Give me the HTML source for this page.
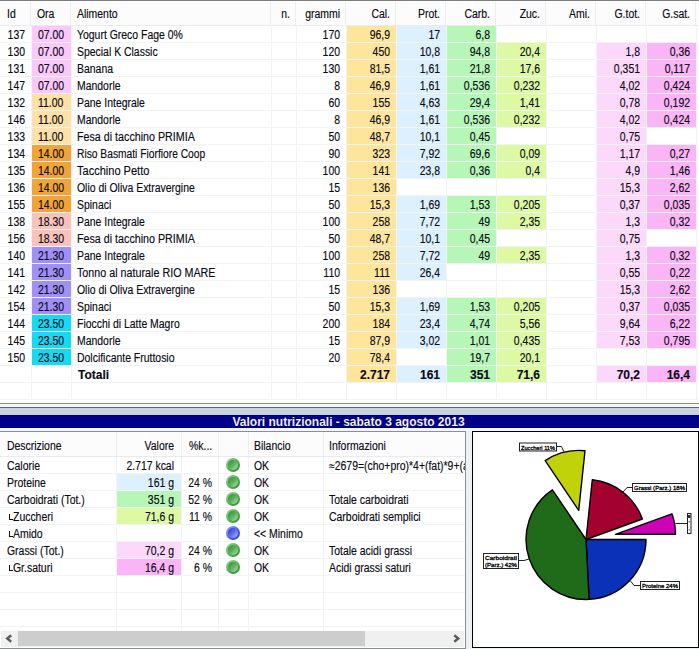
<!DOCTYPE html><html><head><meta charset="utf-8"><style>
html,body{margin:0;padding:0;}
body{width:699px;height:649px;overflow:hidden;position:relative;background:#fff;font-family:"Liberation Sans", sans-serif;font-size:12px;color:#000;}
div{position:absolute;box-sizing:border-box;}
.t{white-space:nowrap;line-height:16px;height:16px;color:#0a0a14;-webkit-text-stroke:0.15px #0a0a14;}
.l{transform-origin:0 0;transform:scaleX(0.87);}
.r{transform-origin:100% 0;transform:scaleX(0.87);text-align:right;}
.b{font-weight:bold;transform:none;}
</style></head><body>
<div style="left:0;top:0;width:699px;height:1px;background:#7b7d7f"></div>
<div style="left:0;top:2px;width:699px;height:23px;background:#fcfcfd"></div>
<div style="left:0;top:25px;width:699px;height:1px;background:#e9ebee"></div>
<div style="left:30px;top:2px;width:1px;height:23px;background:#eceef1"></div>
<div style="left:70px;top:2px;width:1px;height:23px;background:#eceef1"></div>
<div style="left:270px;top:2px;width:1px;height:23px;background:#eceef1"></div>
<div style="left:295px;top:2px;width:1px;height:23px;background:#eceef1"></div>
<div style="left:345px;top:2px;width:1px;height:23px;background:#eceef1"></div>
<div style="left:395px;top:2px;width:1px;height:23px;background:#eceef1"></div>
<div style="left:445px;top:2px;width:1px;height:23px;background:#eceef1"></div>
<div style="left:495px;top:2px;width:1px;height:23px;background:#eceef1"></div>
<div style="left:545px;top:2px;width:1px;height:23px;background:#eceef1"></div>
<div style="left:595px;top:2px;width:1px;height:23px;background:#eceef1"></div>
<div style="left:645px;top:2px;width:1px;height:23px;background:#eceef1"></div>
<div style="left:695px;top:2px;width:1px;height:23px;background:#eceef1"></div>
<div style="left:0;top:42px;width:699px;height:1px;background:#f2f3f4"></div>
<div style="left:0;top:59px;width:699px;height:1px;background:#f2f3f4"></div>
<div style="left:0;top:76px;width:699px;height:1px;background:#f2f3f4"></div>
<div style="left:0;top:93px;width:699px;height:1px;background:#f2f3f4"></div>
<div style="left:0;top:110px;width:699px;height:1px;background:#f2f3f4"></div>
<div style="left:0;top:127px;width:699px;height:1px;background:#f2f3f4"></div>
<div style="left:0;top:144px;width:699px;height:1px;background:#f2f3f4"></div>
<div style="left:0;top:161px;width:699px;height:1px;background:#f2f3f4"></div>
<div style="left:0;top:178px;width:699px;height:1px;background:#f2f3f4"></div>
<div style="left:0;top:195px;width:699px;height:1px;background:#f2f3f4"></div>
<div style="left:0;top:212px;width:699px;height:1px;background:#f2f3f4"></div>
<div style="left:0;top:229px;width:699px;height:1px;background:#f2f3f4"></div>
<div style="left:0;top:246px;width:699px;height:1px;background:#f2f3f4"></div>
<div style="left:0;top:263px;width:699px;height:1px;background:#f2f3f4"></div>
<div style="left:0;top:280px;width:699px;height:1px;background:#f2f3f4"></div>
<div style="left:0;top:297px;width:699px;height:1px;background:#f2f3f4"></div>
<div style="left:0;top:314px;width:699px;height:1px;background:#f2f3f4"></div>
<div style="left:0;top:331px;width:699px;height:1px;background:#f2f3f4"></div>
<div style="left:0;top:348px;width:699px;height:1px;background:#f2f3f4"></div>
<div style="left:0;top:365px;width:699px;height:1px;background:#f2f3f4"></div>
<div style="left:0;top:382px;width:699px;height:1px;background:#f2f3f4"></div>
<div style="left:0;top:399px;width:699px;height:1px;background:#f2f3f4"></div>
<div style="left:31px;top:26px;width:1px;height:374px;background:#f2f3f4"></div>
<div style="left:71px;top:26px;width:1px;height:374px;background:#f2f3f4"></div>
<div style="left:271px;top:26px;width:1px;height:374px;background:#f2f3f4"></div>
<div style="left:296px;top:26px;width:1px;height:374px;background:#f2f3f4"></div>
<div style="left:346px;top:26px;width:1px;height:374px;background:#f2f3f4"></div>
<div style="left:396px;top:26px;width:1px;height:374px;background:#f2f3f4"></div>
<div style="left:446px;top:26px;width:1px;height:374px;background:#f2f3f4"></div>
<div style="left:496px;top:26px;width:1px;height:374px;background:#f2f3f4"></div>
<div style="left:546px;top:26px;width:1px;height:374px;background:#f2f3f4"></div>
<div style="left:596px;top:26px;width:1px;height:374px;background:#f2f3f4"></div>
<div style="left:646px;top:26px;width:1px;height:374px;background:#f2f3f4"></div>
<div style="left:696px;top:26px;width:1px;height:374px;background:#f2f3f4"></div>
<div style="left:32px;top:26px;width:39px;height:16px;background:#fbc8fb"></div>
<div style="left:347px;top:26px;width:49px;height:16px;background:#fde59c"></div>
<div style="left:397px;top:26px;width:49px;height:16px;background:#ddf0fd"></div>
<div style="left:447px;top:26px;width:49px;height:16px;background:#b6f6b6"></div>
<div style="left:32px;top:43px;width:39px;height:16px;background:#fbc8fb"></div>
<div style="left:347px;top:43px;width:49px;height:16px;background:#fde59c"></div>
<div style="left:397px;top:43px;width:49px;height:16px;background:#ddf0fd"></div>
<div style="left:447px;top:43px;width:49px;height:16px;background:#b6f6b6"></div>
<div style="left:497px;top:43px;width:49px;height:16px;background:#ddf9a4"></div>
<div style="left:597px;top:43px;width:49px;height:16px;background:#fcd9fb"></div>
<div style="left:647px;top:43px;width:49px;height:16px;background:#fab5f6"></div>
<div style="left:32px;top:60px;width:39px;height:16px;background:#fbc8fb"></div>
<div style="left:347px;top:60px;width:49px;height:16px;background:#fde59c"></div>
<div style="left:397px;top:60px;width:49px;height:16px;background:#ddf0fd"></div>
<div style="left:447px;top:60px;width:49px;height:16px;background:#b6f6b6"></div>
<div style="left:497px;top:60px;width:49px;height:16px;background:#ddf9a4"></div>
<div style="left:597px;top:60px;width:49px;height:16px;background:#fcd9fb"></div>
<div style="left:647px;top:60px;width:49px;height:16px;background:#fab5f6"></div>
<div style="left:32px;top:77px;width:39px;height:16px;background:#fbc8fb"></div>
<div style="left:347px;top:77px;width:49px;height:16px;background:#fde59c"></div>
<div style="left:397px;top:77px;width:49px;height:16px;background:#ddf0fd"></div>
<div style="left:447px;top:77px;width:49px;height:16px;background:#b6f6b6"></div>
<div style="left:497px;top:77px;width:49px;height:16px;background:#ddf9a4"></div>
<div style="left:597px;top:77px;width:49px;height:16px;background:#fcd9fb"></div>
<div style="left:647px;top:77px;width:49px;height:16px;background:#fab5f6"></div>
<div style="left:32px;top:94px;width:39px;height:16px;background:#fde1a6"></div>
<div style="left:347px;top:94px;width:49px;height:16px;background:#fde59c"></div>
<div style="left:397px;top:94px;width:49px;height:16px;background:#ddf0fd"></div>
<div style="left:447px;top:94px;width:49px;height:16px;background:#b6f6b6"></div>
<div style="left:497px;top:94px;width:49px;height:16px;background:#ddf9a4"></div>
<div style="left:597px;top:94px;width:49px;height:16px;background:#fcd9fb"></div>
<div style="left:647px;top:94px;width:49px;height:16px;background:#fab5f6"></div>
<div style="left:32px;top:111px;width:39px;height:16px;background:#fde1a6"></div>
<div style="left:347px;top:111px;width:49px;height:16px;background:#fde59c"></div>
<div style="left:397px;top:111px;width:49px;height:16px;background:#ddf0fd"></div>
<div style="left:447px;top:111px;width:49px;height:16px;background:#b6f6b6"></div>
<div style="left:497px;top:111px;width:49px;height:16px;background:#ddf9a4"></div>
<div style="left:597px;top:111px;width:49px;height:16px;background:#fcd9fb"></div>
<div style="left:647px;top:111px;width:49px;height:16px;background:#fab5f6"></div>
<div style="left:32px;top:128px;width:39px;height:16px;background:#fde1a6"></div>
<div style="left:347px;top:128px;width:49px;height:16px;background:#fde59c"></div>
<div style="left:397px;top:128px;width:49px;height:16px;background:#ddf0fd"></div>
<div style="left:447px;top:128px;width:49px;height:16px;background:#b6f6b6"></div>
<div style="left:597px;top:128px;width:49px;height:16px;background:#fcd9fb"></div>
<div style="left:32px;top:145px;width:39px;height:16px;background:#f2a438"></div>
<div style="left:347px;top:145px;width:49px;height:16px;background:#fde59c"></div>
<div style="left:397px;top:145px;width:49px;height:16px;background:#ddf0fd"></div>
<div style="left:447px;top:145px;width:49px;height:16px;background:#b6f6b6"></div>
<div style="left:497px;top:145px;width:49px;height:16px;background:#ddf9a4"></div>
<div style="left:597px;top:145px;width:49px;height:16px;background:#fcd9fb"></div>
<div style="left:647px;top:145px;width:49px;height:16px;background:#fab5f6"></div>
<div style="left:32px;top:162px;width:39px;height:16px;background:#f2a438"></div>
<div style="left:347px;top:162px;width:49px;height:16px;background:#fde59c"></div>
<div style="left:397px;top:162px;width:49px;height:16px;background:#ddf0fd"></div>
<div style="left:447px;top:162px;width:49px;height:16px;background:#b6f6b6"></div>
<div style="left:497px;top:162px;width:49px;height:16px;background:#ddf9a4"></div>
<div style="left:597px;top:162px;width:49px;height:16px;background:#fcd9fb"></div>
<div style="left:647px;top:162px;width:49px;height:16px;background:#fab5f6"></div>
<div style="left:32px;top:179px;width:39px;height:16px;background:#f2a438"></div>
<div style="left:347px;top:179px;width:49px;height:16px;background:#fde59c"></div>
<div style="left:597px;top:179px;width:49px;height:16px;background:#fcd9fb"></div>
<div style="left:647px;top:179px;width:49px;height:16px;background:#fab5f6"></div>
<div style="left:32px;top:196px;width:39px;height:16px;background:#f2a438"></div>
<div style="left:347px;top:196px;width:49px;height:16px;background:#fde59c"></div>
<div style="left:397px;top:196px;width:49px;height:16px;background:#ddf0fd"></div>
<div style="left:447px;top:196px;width:49px;height:16px;background:#b6f6b6"></div>
<div style="left:497px;top:196px;width:49px;height:16px;background:#ddf9a4"></div>
<div style="left:597px;top:196px;width:49px;height:16px;background:#fcd9fb"></div>
<div style="left:647px;top:196px;width:49px;height:16px;background:#fab5f6"></div>
<div style="left:32px;top:213px;width:39px;height:16px;background:#fbc2bc"></div>
<div style="left:347px;top:213px;width:49px;height:16px;background:#fde59c"></div>
<div style="left:397px;top:213px;width:49px;height:16px;background:#ddf0fd"></div>
<div style="left:447px;top:213px;width:49px;height:16px;background:#b6f6b6"></div>
<div style="left:497px;top:213px;width:49px;height:16px;background:#ddf9a4"></div>
<div style="left:597px;top:213px;width:49px;height:16px;background:#fcd9fb"></div>
<div style="left:647px;top:213px;width:49px;height:16px;background:#fab5f6"></div>
<div style="left:32px;top:230px;width:39px;height:16px;background:#fbc2bc"></div>
<div style="left:347px;top:230px;width:49px;height:16px;background:#fde59c"></div>
<div style="left:397px;top:230px;width:49px;height:16px;background:#ddf0fd"></div>
<div style="left:447px;top:230px;width:49px;height:16px;background:#b6f6b6"></div>
<div style="left:597px;top:230px;width:49px;height:16px;background:#fcd9fb"></div>
<div style="left:32px;top:247px;width:39px;height:16px;background:#9f8ff6"></div>
<div style="left:347px;top:247px;width:49px;height:16px;background:#fde59c"></div>
<div style="left:397px;top:247px;width:49px;height:16px;background:#ddf0fd"></div>
<div style="left:447px;top:247px;width:49px;height:16px;background:#b6f6b6"></div>
<div style="left:497px;top:247px;width:49px;height:16px;background:#ddf9a4"></div>
<div style="left:597px;top:247px;width:49px;height:16px;background:#fcd9fb"></div>
<div style="left:647px;top:247px;width:49px;height:16px;background:#fab5f6"></div>
<div style="left:32px;top:264px;width:39px;height:16px;background:#9f8ff6"></div>
<div style="left:347px;top:264px;width:49px;height:16px;background:#fde59c"></div>
<div style="left:397px;top:264px;width:49px;height:16px;background:#ddf0fd"></div>
<div style="left:597px;top:264px;width:49px;height:16px;background:#fcd9fb"></div>
<div style="left:647px;top:264px;width:49px;height:16px;background:#fab5f6"></div>
<div style="left:32px;top:281px;width:39px;height:16px;background:#9f8ff6"></div>
<div style="left:347px;top:281px;width:49px;height:16px;background:#fde59c"></div>
<div style="left:597px;top:281px;width:49px;height:16px;background:#fcd9fb"></div>
<div style="left:647px;top:281px;width:49px;height:16px;background:#fab5f6"></div>
<div style="left:32px;top:298px;width:39px;height:16px;background:#9f8ff6"></div>
<div style="left:347px;top:298px;width:49px;height:16px;background:#fde59c"></div>
<div style="left:397px;top:298px;width:49px;height:16px;background:#ddf0fd"></div>
<div style="left:447px;top:298px;width:49px;height:16px;background:#b6f6b6"></div>
<div style="left:497px;top:298px;width:49px;height:16px;background:#ddf9a4"></div>
<div style="left:597px;top:298px;width:49px;height:16px;background:#fcd9fb"></div>
<div style="left:647px;top:298px;width:49px;height:16px;background:#fab5f6"></div>
<div style="left:32px;top:315px;width:39px;height:16px;background:#16d9f2"></div>
<div style="left:347px;top:315px;width:49px;height:16px;background:#fde59c"></div>
<div style="left:397px;top:315px;width:49px;height:16px;background:#ddf0fd"></div>
<div style="left:447px;top:315px;width:49px;height:16px;background:#b6f6b6"></div>
<div style="left:497px;top:315px;width:49px;height:16px;background:#ddf9a4"></div>
<div style="left:597px;top:315px;width:49px;height:16px;background:#fcd9fb"></div>
<div style="left:647px;top:315px;width:49px;height:16px;background:#fab5f6"></div>
<div style="left:32px;top:332px;width:39px;height:16px;background:#16d9f2"></div>
<div style="left:347px;top:332px;width:49px;height:16px;background:#fde59c"></div>
<div style="left:397px;top:332px;width:49px;height:16px;background:#ddf0fd"></div>
<div style="left:447px;top:332px;width:49px;height:16px;background:#b6f6b6"></div>
<div style="left:497px;top:332px;width:49px;height:16px;background:#ddf9a4"></div>
<div style="left:597px;top:332px;width:49px;height:16px;background:#fcd9fb"></div>
<div style="left:647px;top:332px;width:49px;height:16px;background:#fab5f6"></div>
<div style="left:32px;top:349px;width:39px;height:16px;background:#16d9f2"></div>
<div style="left:347px;top:349px;width:49px;height:16px;background:#fde59c"></div>
<div style="left:447px;top:349px;width:49px;height:16px;background:#b6f6b6"></div>
<div style="left:497px;top:349px;width:49px;height:16px;background:#ddf9a4"></div>
<div style="left:347px;top:366px;width:49px;height:16px;background:#fde59c"></div>
<div style="left:397px;top:366px;width:49px;height:16px;background:#ddf0fd"></div>
<div style="left:447px;top:366px;width:49px;height:16px;background:#b6f6b6"></div>
<div style="left:497px;top:366px;width:49px;height:16px;background:#ddf9a4"></div>
<div style="left:597px;top:366px;width:49px;height:16px;background:#fcd9fb"></div>
<div style="left:647px;top:366px;width:49px;height:16px;background:#fab5f6"></div>
<div class="t l" style="left:7px;top:6px">Id</div>
<div class="t l" style="left:36.5px;top:6px">Ora</div>
<div class="t l" style="left:77px;top:6px">Alimento</div>
<div class="t r" style="left:89.5px;top:6px;width:200px">n.</div>
<div class="t r" style="left:140px;top:6px;width:200px">grammi</div>
<div class="t r" style="left:190px;top:6px;width:200px">Cal.</div>
<div class="t r" style="left:240px;top:6px;width:200px">Prot.</div>
<div class="t r" style="left:290px;top:6px;width:200px">Carb.</div>
<div class="t r" style="left:340px;top:6px;width:200px">Zuc.</div>
<div class="t r" style="left:390px;top:6px;width:200px">Ami.</div>
<div class="t r" style="left:440px;top:6px;width:200px">G.tot.</div>
<div class="t r" style="left:490px;top:6px;width:200px">G.sat.</div>
<div class="t r" style="left:-175px;top:27px;width:200px">137</div>
<div class="t l" style="left:37.5px;top:27px">07.00</div>
<div class="t l" style="left:77px;top:27px">Yogurt Greco Fage 0%</div>
<div class="t r" style="left:140px;top:27px;width:200px">170</div>
<div class="t r" style="left:190px;top:27px;width:200px">96,9</div>
<div class="t r" style="left:240px;top:27px;width:200px">17</div>
<div class="t r" style="left:290px;top:27px;width:200px">6,8</div>
<div class="t r" style="left:-175px;top:44px;width:200px">130</div>
<div class="t l" style="left:37.5px;top:44px">07.00</div>
<div class="t l" style="left:77px;top:44px">Special K Classic</div>
<div class="t r" style="left:140px;top:44px;width:200px">120</div>
<div class="t r" style="left:190px;top:44px;width:200px">450</div>
<div class="t r" style="left:240px;top:44px;width:200px">10,8</div>
<div class="t r" style="left:290px;top:44px;width:200px">94,8</div>
<div class="t r" style="left:340px;top:44px;width:200px">20,4</div>
<div class="t r" style="left:440px;top:44px;width:200px">1,8</div>
<div class="t r" style="left:490px;top:44px;width:200px">0,36</div>
<div class="t r" style="left:-175px;top:61px;width:200px">131</div>
<div class="t l" style="left:37.5px;top:61px">07.00</div>
<div class="t l" style="left:77px;top:61px">Banana</div>
<div class="t r" style="left:140px;top:61px;width:200px">130</div>
<div class="t r" style="left:190px;top:61px;width:200px">81,5</div>
<div class="t r" style="left:240px;top:61px;width:200px">1,61</div>
<div class="t r" style="left:290px;top:61px;width:200px">21,8</div>
<div class="t r" style="left:340px;top:61px;width:200px">17,6</div>
<div class="t r" style="left:440px;top:61px;width:200px">0,351</div>
<div class="t r" style="left:490px;top:61px;width:200px">0,117</div>
<div class="t r" style="left:-175px;top:78px;width:200px">147</div>
<div class="t l" style="left:37.5px;top:78px">07.00</div>
<div class="t l" style="left:77px;top:78px">Mandorle</div>
<div class="t r" style="left:140px;top:78px;width:200px">8</div>
<div class="t r" style="left:190px;top:78px;width:200px">46,9</div>
<div class="t r" style="left:240px;top:78px;width:200px">1,61</div>
<div class="t r" style="left:290px;top:78px;width:200px">0,536</div>
<div class="t r" style="left:340px;top:78px;width:200px">0,232</div>
<div class="t r" style="left:440px;top:78px;width:200px">4,02</div>
<div class="t r" style="left:490px;top:78px;width:200px">0,424</div>
<div class="t r" style="left:-175px;top:95px;width:200px">132</div>
<div class="t l" style="left:37.5px;top:95px">11.00</div>
<div class="t l" style="left:77px;top:95px">Pane Integrale</div>
<div class="t r" style="left:140px;top:95px;width:200px">60</div>
<div class="t r" style="left:190px;top:95px;width:200px">155</div>
<div class="t r" style="left:240px;top:95px;width:200px">4,63</div>
<div class="t r" style="left:290px;top:95px;width:200px">29,4</div>
<div class="t r" style="left:340px;top:95px;width:200px">1,41</div>
<div class="t r" style="left:440px;top:95px;width:200px">0,78</div>
<div class="t r" style="left:490px;top:95px;width:200px">0,192</div>
<div class="t r" style="left:-175px;top:112px;width:200px">146</div>
<div class="t l" style="left:37.5px;top:112px">11.00</div>
<div class="t l" style="left:77px;top:112px">Mandorle</div>
<div class="t r" style="left:140px;top:112px;width:200px">8</div>
<div class="t r" style="left:190px;top:112px;width:200px">46,9</div>
<div class="t r" style="left:240px;top:112px;width:200px">1,61</div>
<div class="t r" style="left:290px;top:112px;width:200px">0,536</div>
<div class="t r" style="left:340px;top:112px;width:200px">0,232</div>
<div class="t r" style="left:440px;top:112px;width:200px">4,02</div>
<div class="t r" style="left:490px;top:112px;width:200px">0,424</div>
<div class="t r" style="left:-175px;top:129px;width:200px">133</div>
<div class="t l" style="left:37.5px;top:129px">11.00</div>
<div class="t l" style="left:77px;top:129px;transform:scaleX(0.8926)">Fesa di tacchino PRIMIA</div>
<div class="t r" style="left:140px;top:129px;width:200px">50</div>
<div class="t r" style="left:190px;top:129px;width:200px">48,7</div>
<div class="t r" style="left:240px;top:129px;width:200px">10,1</div>
<div class="t r" style="left:290px;top:129px;width:200px">0,45</div>
<div class="t r" style="left:440px;top:129px;width:200px">0,75</div>
<div class="t r" style="left:-175px;top:146px;width:200px">134</div>
<div class="t l" style="left:37.5px;top:146px">14.00</div>
<div class="t l" style="left:77px;top:146px;transform:scaleX(0.8543)">Riso Basmati Fiorfiore Coop</div>
<div class="t r" style="left:140px;top:146px;width:200px">90</div>
<div class="t r" style="left:190px;top:146px;width:200px">323</div>
<div class="t r" style="left:240px;top:146px;width:200px">7,92</div>
<div class="t r" style="left:290px;top:146px;width:200px">69,6</div>
<div class="t r" style="left:340px;top:146px;width:200px">0,09</div>
<div class="t r" style="left:440px;top:146px;width:200px">1,17</div>
<div class="t r" style="left:490px;top:146px;width:200px">0,27</div>
<div class="t r" style="left:-175px;top:163px;width:200px">135</div>
<div class="t l" style="left:37.5px;top:163px">14.00</div>
<div class="t l" style="left:77px;top:163px;transform:scaleX(0.9196)">Tacchino Petto</div>
<div class="t r" style="left:140px;top:163px;width:200px">100</div>
<div class="t r" style="left:190px;top:163px;width:200px">141</div>
<div class="t r" style="left:240px;top:163px;width:200px">23,8</div>
<div class="t r" style="left:290px;top:163px;width:200px">0,36</div>
<div class="t r" style="left:340px;top:163px;width:200px">0,4</div>
<div class="t r" style="left:440px;top:163px;width:200px">4,9</div>
<div class="t r" style="left:490px;top:163px;width:200px">1,46</div>
<div class="t r" style="left:-175px;top:180px;width:200px">136</div>
<div class="t l" style="left:37.5px;top:180px">14.00</div>
<div class="t l" style="left:77px;top:180px">Olio di Oliva Extravergine</div>
<div class="t r" style="left:140px;top:180px;width:200px">15</div>
<div class="t r" style="left:190px;top:180px;width:200px">136</div>
<div class="t r" style="left:440px;top:180px;width:200px">15,3</div>
<div class="t r" style="left:490px;top:180px;width:200px">2,62</div>
<div class="t r" style="left:-175px;top:197px;width:200px">155</div>
<div class="t l" style="left:37.5px;top:197px">14.00</div>
<div class="t l" style="left:77px;top:197px">Spinaci</div>
<div class="t r" style="left:140px;top:197px;width:200px">50</div>
<div class="t r" style="left:190px;top:197px;width:200px">15,3</div>
<div class="t r" style="left:240px;top:197px;width:200px">1,69</div>
<div class="t r" style="left:290px;top:197px;width:200px">1,53</div>
<div class="t r" style="left:340px;top:197px;width:200px">0,205</div>
<div class="t r" style="left:440px;top:197px;width:200px">0,37</div>
<div class="t r" style="left:490px;top:197px;width:200px">0,035</div>
<div class="t r" style="left:-175px;top:214px;width:200px">138</div>
<div class="t l" style="left:37.5px;top:214px">18.30</div>
<div class="t l" style="left:77px;top:214px">Pane Integrale</div>
<div class="t r" style="left:140px;top:214px;width:200px">100</div>
<div class="t r" style="left:190px;top:214px;width:200px">258</div>
<div class="t r" style="left:240px;top:214px;width:200px">7,72</div>
<div class="t r" style="left:290px;top:214px;width:200px">49</div>
<div class="t r" style="left:340px;top:214px;width:200px">2,35</div>
<div class="t r" style="left:440px;top:214px;width:200px">1,3</div>
<div class="t r" style="left:490px;top:214px;width:200px">0,32</div>
<div class="t r" style="left:-175px;top:231px;width:200px">156</div>
<div class="t l" style="left:37.5px;top:231px">18.30</div>
<div class="t l" style="left:77px;top:231px;transform:scaleX(0.8926)">Fesa di tacchino PRIMIA</div>
<div class="t r" style="left:140px;top:231px;width:200px">50</div>
<div class="t r" style="left:190px;top:231px;width:200px">48,7</div>
<div class="t r" style="left:240px;top:231px;width:200px">10,1</div>
<div class="t r" style="left:290px;top:231px;width:200px">0,45</div>
<div class="t r" style="left:440px;top:231px;width:200px">0,75</div>
<div class="t r" style="left:-175px;top:248px;width:200px">140</div>
<div class="t l" style="left:37.5px;top:248px">21.30</div>
<div class="t l" style="left:77px;top:248px">Pane Integrale</div>
<div class="t r" style="left:140px;top:248px;width:200px">100</div>
<div class="t r" style="left:190px;top:248px;width:200px">258</div>
<div class="t r" style="left:240px;top:248px;width:200px">7,72</div>
<div class="t r" style="left:290px;top:248px;width:200px">49</div>
<div class="t r" style="left:340px;top:248px;width:200px">2,35</div>
<div class="t r" style="left:440px;top:248px;width:200px">1,3</div>
<div class="t r" style="left:490px;top:248px;width:200px">0,32</div>
<div class="t r" style="left:-175px;top:265px;width:200px">141</div>
<div class="t l" style="left:37.5px;top:265px">21.30</div>
<div class="t l" style="left:77px;top:265px;transform:scaleX(0.8952)">Tonno al naturale RIO MARE</div>
<div class="t r" style="left:140px;top:265px;width:200px">110</div>
<div class="t r" style="left:190px;top:265px;width:200px">111</div>
<div class="t r" style="left:240px;top:265px;width:200px">26,4</div>
<div class="t r" style="left:440px;top:265px;width:200px">0,55</div>
<div class="t r" style="left:490px;top:265px;width:200px">0,22</div>
<div class="t r" style="left:-175px;top:282px;width:200px">142</div>
<div class="t l" style="left:37.5px;top:282px">21.30</div>
<div class="t l" style="left:77px;top:282px">Olio di Oliva Extravergine</div>
<div class="t r" style="left:140px;top:282px;width:200px">15</div>
<div class="t r" style="left:190px;top:282px;width:200px">136</div>
<div class="t r" style="left:440px;top:282px;width:200px">15,3</div>
<div class="t r" style="left:490px;top:282px;width:200px">2,62</div>
<div class="t r" style="left:-175px;top:299px;width:200px">154</div>
<div class="t l" style="left:37.5px;top:299px">21.30</div>
<div class="t l" style="left:77px;top:299px">Spinaci</div>
<div class="t r" style="left:140px;top:299px;width:200px">50</div>
<div class="t r" style="left:190px;top:299px;width:200px">15,3</div>
<div class="t r" style="left:240px;top:299px;width:200px">1,69</div>
<div class="t r" style="left:290px;top:299px;width:200px">1,53</div>
<div class="t r" style="left:340px;top:299px;width:200px">0,205</div>
<div class="t r" style="left:440px;top:299px;width:200px">0,37</div>
<div class="t r" style="left:490px;top:299px;width:200px">0,035</div>
<div class="t r" style="left:-175px;top:316px;width:200px">144</div>
<div class="t l" style="left:37.5px;top:316px">23.50</div>
<div class="t l" style="left:77px;top:316px">Fiocchi di Latte Magro</div>
<div class="t r" style="left:140px;top:316px;width:200px">200</div>
<div class="t r" style="left:190px;top:316px;width:200px">184</div>
<div class="t r" style="left:240px;top:316px;width:200px">23,4</div>
<div class="t r" style="left:290px;top:316px;width:200px">4,74</div>
<div class="t r" style="left:340px;top:316px;width:200px">5,56</div>
<div class="t r" style="left:440px;top:316px;width:200px">9,64</div>
<div class="t r" style="left:490px;top:316px;width:200px">6,22</div>
<div class="t r" style="left:-175px;top:333px;width:200px">145</div>
<div class="t l" style="left:37.5px;top:333px">23.50</div>
<div class="t l" style="left:77px;top:333px">Mandorle</div>
<div class="t r" style="left:140px;top:333px;width:200px">15</div>
<div class="t r" style="left:190px;top:333px;width:200px">87,9</div>
<div class="t r" style="left:240px;top:333px;width:200px">3,02</div>
<div class="t r" style="left:290px;top:333px;width:200px">1,01</div>
<div class="t r" style="left:340px;top:333px;width:200px">0,435</div>
<div class="t r" style="left:440px;top:333px;width:200px">7,53</div>
<div class="t r" style="left:490px;top:333px;width:200px">0,795</div>
<div class="t r" style="left:-175px;top:350px;width:200px">150</div>
<div class="t l" style="left:37.5px;top:350px">23.50</div>
<div class="t l" style="left:77px;top:350px">Dolcificante Fruttosio</div>
<div class="t r" style="left:140px;top:350px;width:200px">20</div>
<div class="t r" style="left:190px;top:350px;width:200px">78,4</div>
<div class="t r" style="left:290px;top:350px;width:200px">19,7</div>
<div class="t r" style="left:340px;top:350px;width:200px">20,1</div>
<div class="t l b" style="left:78px;top:367px">Totali</div>
<div class="t r b" style="left:190px;top:367px;width:200px">2.717</div>
<div class="t r b" style="left:240px;top:367px;width:200px">161</div>
<div class="t r b" style="left:290px;top:367px;width:200px">351</div>
<div class="t r b" style="left:340px;top:367px;width:200px">71,6</div>
<div class="t r b" style="left:440px;top:367px;width:200px">70,2</div>
<div class="t r b" style="left:490px;top:367px;width:200px">16,4</div>
<div style="left:0;top:403px;width:699px;height:1px;background:#8a8d91"></div>
<div style="left:0;top:404px;width:699px;height:3px;background:#f4f7fa"></div>
<div style="left:0;top:407px;width:699px;height:1px;background:#5c656e"></div>
<div style="left:0;top:408px;width:699px;height:6px;background:#c9d3df"></div>
<div style="left:0;top:414px;width:699px;height:1px;background:#c4c8ee"></div>
<div style="left:0;top:415px;width:699px;height:13px;background:#000088"></div>
<div style="left:0;top:415px;width:699px;height:1px;background:#000070"></div>
<div style="left:0;top:427px;width:699px;height:1px;background:#000070"></div>
<div style="left:0;top:428px;width:699px;height:221px;background:#edf1f6"></div>
<div style="left:0;top:428px;width:699px;height:3px;background:#f3f6fb"></div>
<div class="t b" style="left:232.5px;top:413.5px;color:#fff">Valori nutrizionali - sabato 3 agosto 2013</div>
<div style="left:0;top:431px;width:466px;height:218px;background:#fff;border-top:1px solid #8a8e92;border-right:1px solid #8a8e92;border-bottom:1px solid #8a8e92"></div>
<div style="left:0;top:432px;width:465px;height:24px;background:#fcfcfd"></div>
<div style="left:116px;top:432px;width:1px;height:24px;background:#eceef1"></div>
<div style="left:181px;top:432px;width:1px;height:24px;background:#eceef1"></div>
<div style="left:218px;top:432px;width:1px;height:24px;background:#eceef1"></div>
<div style="left:248px;top:432px;width:1px;height:24px;background:#eceef1"></div>
<div style="left:323px;top:432px;width:1px;height:24px;background:#eceef1"></div>
<div style="left:0;top:456px;width:465px;height:1px;background:#e9ebee"></div>
<div style="left:0;top:473px;width:465px;height:1px;background:#f2f3f4"></div>
<div style="left:0;top:490px;width:465px;height:1px;background:#f2f3f4"></div>
<div style="left:0;top:507px;width:465px;height:1px;background:#f2f3f4"></div>
<div style="left:0;top:524px;width:465px;height:1px;background:#f2f3f4"></div>
<div style="left:0;top:541px;width:465px;height:1px;background:#f2f3f4"></div>
<div style="left:0;top:558px;width:465px;height:1px;background:#f2f3f4"></div>
<div style="left:0;top:575px;width:465px;height:1px;background:#f2f3f4"></div>
<div style="left:0;top:592px;width:465px;height:1px;background:#f2f3f4"></div>
<div style="left:0;top:609px;width:465px;height:1px;background:#f2f3f4"></div>
<div style="left:0;top:626px;width:465px;height:1px;background:#f2f3f4"></div>
<div style="left:116px;top:457px;width:1px;height:174px;background:#f2f3f4"></div>
<div style="left:181px;top:457px;width:1px;height:174px;background:#f2f3f4"></div>
<div style="left:218px;top:457px;width:1px;height:174px;background:#f2f3f4"></div>
<div style="left:248px;top:457px;width:1px;height:174px;background:#f2f3f4"></div>
<div style="left:323px;top:457px;width:1px;height:174px;background:#f2f3f4"></div>
<div style="left:117px;top:474px;width:64px;height:16px;background:#ddf0fd"></div>
<div style="left:117px;top:491px;width:64px;height:16px;background:#b6f6b6"></div>
<div style="left:117px;top:508px;width:64px;height:16px;background:#ddf9a4"></div>
<div style="left:117px;top:542px;width:64px;height:16px;background:#fcd9fb"></div>
<div style="left:117px;top:559px;width:64px;height:16px;background:#fab5f6"></div>
<div class="t l" style="left:7px;top:438px">Descrizione</div>
<div class="t r" style="left:-26px;top:438px;width:200px">Valore</div>
<div class="t l" style="left:189px;top:438px">%k...</div>
<div class="t l" style="left:254px;top:438px">Bilancio</div>
<div class="t l" style="left:329px;top:438px">Informazioni</div>
<div class="t l" style="left:7px;top:458px">Calorie</div>
<div class="t r" style="left:-26px;top:458px;width:200px">2.717 kcal</div>
<div class="t l" style="left:254px;top:458px">OK</div>
<div style="left:323px;top:458px;width:142px;height:16px;overflow:hidden"><div class="t l" style="left:6px;top:0">≈2679=(cho+pro)*4+(fat)*9+(alc)*7</div></div>
<div style="left:226px;top:458px;width:14px;height:14px;border-radius:50%;background:linear-gradient(135deg,#9ad89a 0%,#5cb05c 50%,#2a862a 100%)"></div>
<div style="left:228px;top:460px;width:10px;height:10px;border-radius:50%;background:linear-gradient(135deg,#2e8e2e 0%,#5cb25c 50%,#b0e4b0 100%)"></div>
<div class="t l" style="left:7px;top:475px">Proteine</div>
<div class="t r" style="left:-26px;top:475px;width:200px">161 g</div>
<div class="t r" style="left:11.5px;top:475px;width:200px">24 %</div>
<div class="t l" style="left:254px;top:475px">OK</div>
<div style="left:226px;top:475px;width:14px;height:14px;border-radius:50%;background:linear-gradient(135deg,#9ad89a 0%,#5cb05c 50%,#2a862a 100%)"></div>
<div style="left:228px;top:477px;width:10px;height:10px;border-radius:50%;background:linear-gradient(135deg,#2e8e2e 0%,#5cb25c 50%,#b0e4b0 100%)"></div>
<div class="t l" style="left:7px;top:492px">Carboidrati (Tot.)</div>
<div class="t r" style="left:-26px;top:492px;width:200px">351 g</div>
<div class="t r" style="left:11.5px;top:492px;width:200px">52 %</div>
<div class="t l" style="left:254px;top:492px">OK</div>
<div style="left:323px;top:492px;width:142px;height:16px;overflow:hidden"><div class="t l" style="left:6px;top:0">Totale carboidrati</div></div>
<div style="left:226px;top:492px;width:14px;height:14px;border-radius:50%;background:linear-gradient(135deg,#9ad89a 0%,#5cb05c 50%,#2a862a 100%)"></div>
<div style="left:228px;top:494px;width:10px;height:10px;border-radius:50%;background:linear-gradient(135deg,#2e8e2e 0%,#5cb25c 50%,#b0e4b0 100%)"></div>
<div style="left:9px;top:514px;width:4px;height:6px;border-left:1px solid #111;border-bottom:1px solid #111"></div>
<div class="t l" style="left:13px;top:509px">Zuccheri</div>
<div class="t r" style="left:-26px;top:509px;width:200px">71,6 g</div>
<div class="t r" style="left:11.5px;top:509px;width:200px">11 %</div>
<div class="t l" style="left:254px;top:509px">OK</div>
<div style="left:323px;top:509px;width:142px;height:16px;overflow:hidden"><div class="t l" style="left:6px;top:0">Carboidrati semplici</div></div>
<div style="left:226px;top:509px;width:14px;height:14px;border-radius:50%;background:linear-gradient(135deg,#9ad89a 0%,#5cb05c 50%,#2a862a 100%)"></div>
<div style="left:228px;top:511px;width:10px;height:10px;border-radius:50%;background:linear-gradient(135deg,#2e8e2e 0%,#5cb25c 50%,#b0e4b0 100%)"></div>
<div style="left:9px;top:531px;width:4px;height:6px;border-left:1px solid #111;border-bottom:1px solid #111"></div>
<div class="t l" style="left:13px;top:526px">Amido</div>
<div class="t l" style="left:254px;top:526px">&lt;&lt; Minimo</div>
<div style="left:226px;top:526px;width:14px;height:14px;border-radius:50%;background:linear-gradient(135deg,#a0acff 0%,#5868ec 50%,#2430c8 100%)"></div>
<div style="left:228px;top:528px;width:10px;height:10px;border-radius:50%;background:linear-gradient(135deg,#2a36d0 0%,#5a6cf0 50%,#b8c4ff 100%)"></div>
<div class="t l" style="left:7px;top:543px">Grassi (Tot.)</div>
<div class="t r" style="left:-26px;top:543px;width:200px">70,2 g</div>
<div class="t r" style="left:11.5px;top:543px;width:200px">24 %</div>
<div class="t l" style="left:254px;top:543px">OK</div>
<div style="left:323px;top:543px;width:142px;height:16px;overflow:hidden"><div class="t l" style="left:6px;top:0">Totale acidi grassi</div></div>
<div style="left:226px;top:543px;width:14px;height:14px;border-radius:50%;background:linear-gradient(135deg,#9ad89a 0%,#5cb05c 50%,#2a862a 100%)"></div>
<div style="left:228px;top:545px;width:10px;height:10px;border-radius:50%;background:linear-gradient(135deg,#2e8e2e 0%,#5cb25c 50%,#b0e4b0 100%)"></div>
<div style="left:9px;top:565px;width:4px;height:6px;border-left:1px solid #111;border-bottom:1px solid #111"></div>
<div class="t l" style="left:13px;top:560px">Gr.saturi</div>
<div class="t r" style="left:-26px;top:560px;width:200px">16,4 g</div>
<div class="t r" style="left:11.5px;top:560px;width:200px">6 %</div>
<div class="t l" style="left:254px;top:560px">OK</div>
<div style="left:323px;top:560px;width:142px;height:16px;overflow:hidden"><div class="t l" style="left:6px;top:0">Acidi grassi saturi</div></div>
<div style="left:226px;top:560px;width:14px;height:14px;border-radius:50%;background:linear-gradient(135deg,#9ad89a 0%,#5cb05c 50%,#2a862a 100%)"></div>
<div style="left:228px;top:562px;width:10px;height:10px;border-radius:50%;background:linear-gradient(135deg,#2e8e2e 0%,#5cb25c 50%,#b0e4b0 100%)"></div>
<div style="left:1px;top:631px;width:463px;height:16px;background:#f0f0f0"></div>
<div style="left:18px;top:631px;width:347px;height:15px;background:#cdcdcd"></div>
<svg style="position:absolute;left:0;top:0" width="699" height="649"><polyline points="11.2,635.2 7.2,638.5 11.2,641.8" fill="none" stroke="#5a5a5a" stroke-width="2.4"/><polyline points="454.3,635.2 458.3,638.5 454.3,641.8" fill="none" stroke="#5a5a5a" stroke-width="2.4"/></svg>
<div style="left:472px;top:431px;width:227px;height:217px;background:#fff;border:1px solid #000"></div>
<svg style="position:absolute;left:0;top:0" width="699" height="649" viewBox="0 0 699 649"><path d="M586.0 539.5 L646.0 539.5 A60 60 0 0 1 589.1 599.4 Z" fill="#0a31b8" stroke="#000" stroke-width="1.4" stroke-linejoin="round"/><path d="M586.0 539.5 L589.1 599.4 A60 60 0 0 1 552.4 489.8 Z" fill="#1f6b1a" stroke="#000" stroke-width="1.4" stroke-linejoin="round"/><path d="M578.7 510.4 L545.2 460.6 A60 60 0 0 1 585.0 450.7 Z" fill="#bfd20a" stroke="#000" stroke-width="1.4" stroke-linejoin="round"/><path d="M586.0 539.5 L592.3 479.8 A60 60 0 0 1 642.4 519.0 Z" fill="#a3022e" stroke="#000" stroke-width="1.4" stroke-linejoin="round"/><path d="M615.5 534.3 L671.9 513.8 A60 60 0 0 1 675.5 534.3 Z" fill="#d000b8" stroke="#000" stroke-width="1.4" stroke-linejoin="round"/><polyline points="556.6,446.5 561.5,446.5 564.0,452.0" fill="none" stroke="#222" stroke-width="1"/><rect x="519.5" y="443.0" width="37.0" height="8.0" fill="#fff" stroke="#222" stroke-width="1"/><text x="538.0" y="449.7" font-family="Liberation Sans" font-size="6.2" font-weight="normal" fill="#000" stroke="#000" stroke-width="0.3" text-anchor="middle" textLength="34.0" lengthAdjust="spacingAndGlyphs">Zuccheri 11%</text><polyline points="632.0,487.5 627.0,487.5 623.0,492.0" fill="none" stroke="#222" stroke-width="1"/><rect x="632.5" y="483.5" width="54.0" height="8.0" fill="#fff" stroke="#222" stroke-width="1"/><text x="659.5" y="490.2" font-family="Liberation Sans" font-size="6.2" font-weight="normal" fill="#000" stroke="#000" stroke-width="0.3" text-anchor="middle" textLength="51.0" lengthAdjust="spacingAndGlyphs">Grassi (Parz.) 18%</text><polyline points="518.0,560.5 524.0,560.5 529.0,559.0" fill="none" stroke="#222" stroke-width="1"/><rect x="483.5" y="553.5" width="35.0" height="15.0" fill="#fff" stroke="#222" stroke-width="1"/><text x="501.0" y="559.7" font-family="Liberation Sans" font-size="6.2" font-weight="normal" fill="#000" stroke="#000" stroke-width="0.3" text-anchor="middle" textLength="32.0" lengthAdjust="spacingAndGlyphs">Carboidrati</text><text x="501.0" y="567.2" font-family="Liberation Sans" font-size="6.2" font-weight="normal" fill="#000" stroke="#000" stroke-width="0.3" text-anchor="middle" textLength="32.0" lengthAdjust="spacingAndGlyphs">(Parz.) 42%</text><polyline points="640.0,585.5 634.0,585.5 630.5,581.0" fill="none" stroke="#222" stroke-width="1"/><rect x="640.5" y="581.5" width="39.0" height="8.0" fill="#fff" stroke="#222" stroke-width="1"/><text x="660.0" y="588.2" font-family="Liberation Sans" font-size="6.2" font-weight="normal" fill="#000" stroke="#000" stroke-width="0.3" text-anchor="middle" textLength="36.0" lengthAdjust="spacingAndGlyphs">Proteine 24%</text><polyline points="675.4,523.5 687.0,523.5" fill="none" stroke="#222" stroke-width="1"/><rect x="687.5" y="513.5" width="3.5" height="20" fill="#fff" stroke="#222" stroke-width="1"/><rect x="688" y="515" width="2.5" height="3" fill="#333"/><rect x="688.6" y="521" width="1.2" height="1.5" fill="#666"/><rect x="688.6" y="529" width="1.2" height="1.5" fill="#888"/></svg>
</body></html>
